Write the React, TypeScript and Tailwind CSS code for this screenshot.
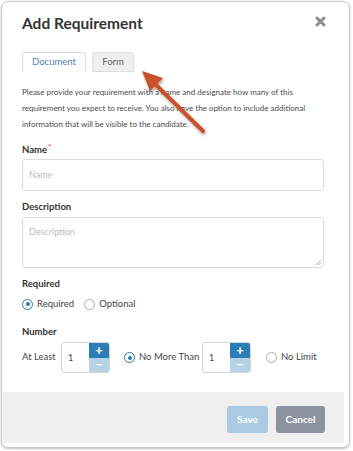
const font = { fontFamily: "Lato, 'Open Sans', sans-serif" };

function Radio({ checked, label }: { checked?: boolean; label: string }) {
  return (
    <div className="flex items-center gap-[4px]">
      <span
        className={`flex h-[11px] w-[11px] items-center justify-center rounded-full border-[1.5px] bg-white ${
          checked ? "border-[#2a78b0]" : "border-[#a9a9a9]"
        }`}
      >
        {checked && <span className="h-[4px] w-[4px] rounded-full bg-[#2a78b0]" />}
      </span>
      <span className="text-[9.5px] text-[#444]">{label}</span>
    </div>
  );
}

function Stepper() {
  return (
    <div className="flex h-[31px] w-[49px] overflow-hidden rounded-[3px] border border-[#d4d4d4] bg-white">
      <div className="flex flex-1 items-center pl-[6px] text-[9px] text-[#444]">1</div>
      <div className="flex w-[20px] flex-col">
        <div className="flex h-1/2 items-center justify-center bg-[#2d7db5] text-[13px] font-bold leading-none text-white">+</div>
        <div className="flex h-1/2 items-center justify-center bg-[#b5d2e6] text-[13px] font-bold leading-none text-white">−</div>
      </div>
    </div>
  );
}

export default function App() {
  return (
    <div className="relative h-[451px] w-[353px] overflow-hidden bg-white" style={font}>
      <div className="ml-[1px] mt-[1px] flex h-[447px] w-[349px] flex-col rounded-[7px] border border-[#c8c8c8] bg-white shadow-[0_1px_2px_rgba(0,0,0,0.25)]">
        <div className="flex items-start justify-between pl-[20px] pr-[23px] pt-[10px]">
          <h2 className="text-[15.5px] font-bold leading-[22px] text-[#333]">Add Requirement</h2>
          <svg className="mt-[4px]" width="11" height="11" viewBox="0 0 11 11">
            <path d="M2 2 L9 9 M9 2 L2 9" stroke="#8c8c8c" strokeWidth="3" strokeLinecap="round" />
          </svg>
        </div>

        <div className="ml-[20px] mt-[18px] flex gap-[6px]">
          <div className="flex h-[20px] w-[64px] items-center justify-center rounded-t-[3px] border border-b-0 border-[#ddd] bg-white text-[9.5px] text-[#4a7fc1]">
            Document
          </div>
          <div className="flex h-[20px] w-[42px] items-center justify-center rounded-t-[3px] border border-[#ddd] bg-[#efefef] text-[9.5px] text-[#666]">
            Form
          </div>
        </div>

        <div className="px-[20px]">
          <p className="mt-[12px] text-[8px] leading-[16px] text-[#4a4a4a]">
            Please provide your requirement with a name and designate how many of this requirement you expect to receive. You also have the option to include additional information that will be visible to the candidate.
          </p>

          <div className="mt-[11px] flex h-[14px] items-center text-[9.5px] font-bold text-[#333]">
            Name<span className="ml-[1px] -mt-[6px] text-[8px] text-[#e04b4b]">*</span>
          </div>
          <div className="mt-[2px] flex h-[32px] w-[302px] items-center rounded-[3px] border border-[#ddd] pl-[6px] text-[9px] text-[#bbb]">
            Name
          </div>

          <div className="mt-[9px] flex h-[14px] items-center text-[9.5px] font-bold text-[#333]">Description</div>
          <div className="relative mt-[3px] h-[51px] w-[302px] rounded-[3px] border border-[#ddd] pl-[6px] pt-[7px] text-[9px] text-[#bbb]">
            Description
            <svg className="absolute bottom-[2px] right-[2px]" width="6" height="6" viewBox="0 0 6 6">
              <path d="M1 6 L6 1 M3.5 6 L6 3.5" stroke="#999" strokeWidth="0.8" />
            </svg>
          </div>

          <div className="mt-[9px] flex h-[14px] items-center text-[9.5px] font-bold text-[#333]">Required</div>
          <div className="mt-[6px] flex h-[14px] items-center gap-[10px]">
            <Radio checked label="Required" />
            <Radio label="Optional" />
          </div>

          <div className="mt-[14px] flex h-[14px] items-center text-[9.5px] font-bold text-[#333]">Number</div>
          <div className="mt-[3px] flex h-[31px] items-center">
            <span className="w-[39px] text-[9.5px] text-[#444]">At Least</span>
            <Stepper />
            <div className="ml-[14px] w-[78px]">
              <Radio checked label="No More Than" />
            </div>
            <Stepper />
            <div className="ml-[15px]">
              <Radio label="No Limit" />
            </div>
          </div>
        </div>

        <div className="ml-[1px] mr-[5px] mt-[19px] flex h-[51px] justify-end gap-[8px] bg-[#efefef] pr-[19px] pt-[14px]">
          <button className="h-[27px] w-[41px] rounded-[3px] bg-[#a9cbe1] text-[10px] font-bold text-white">Save</button>
          <button className="h-[27px] w-[49px] rounded-[3px] bg-[#8d939e] text-[10px] font-bold text-white">Cancel</button>
        </div>
      </div>

      <svg className="pointer-events-none absolute left-0 top-0" width="353" height="451" viewBox="0 0 353 451">
        <defs>
          <filter id="sh" x="-20%" y="-20%" width="140%" height="140%">
            <feDropShadow dx="1" dy="2" stdDeviation="1.5" floodColor="#000" floodOpacity="0.35" />
          </filter>
        </defs>
        <g filter="url(#sh)">
          <line x1="154" y1="83" x2="203" y2="131" stroke="#c9512b" strokeWidth="4" strokeLinecap="round" />
          <polygon points="142,71 163,78 150,91" fill="#c9512b" />
        </g>
      </svg>
    </div>
  );
}
